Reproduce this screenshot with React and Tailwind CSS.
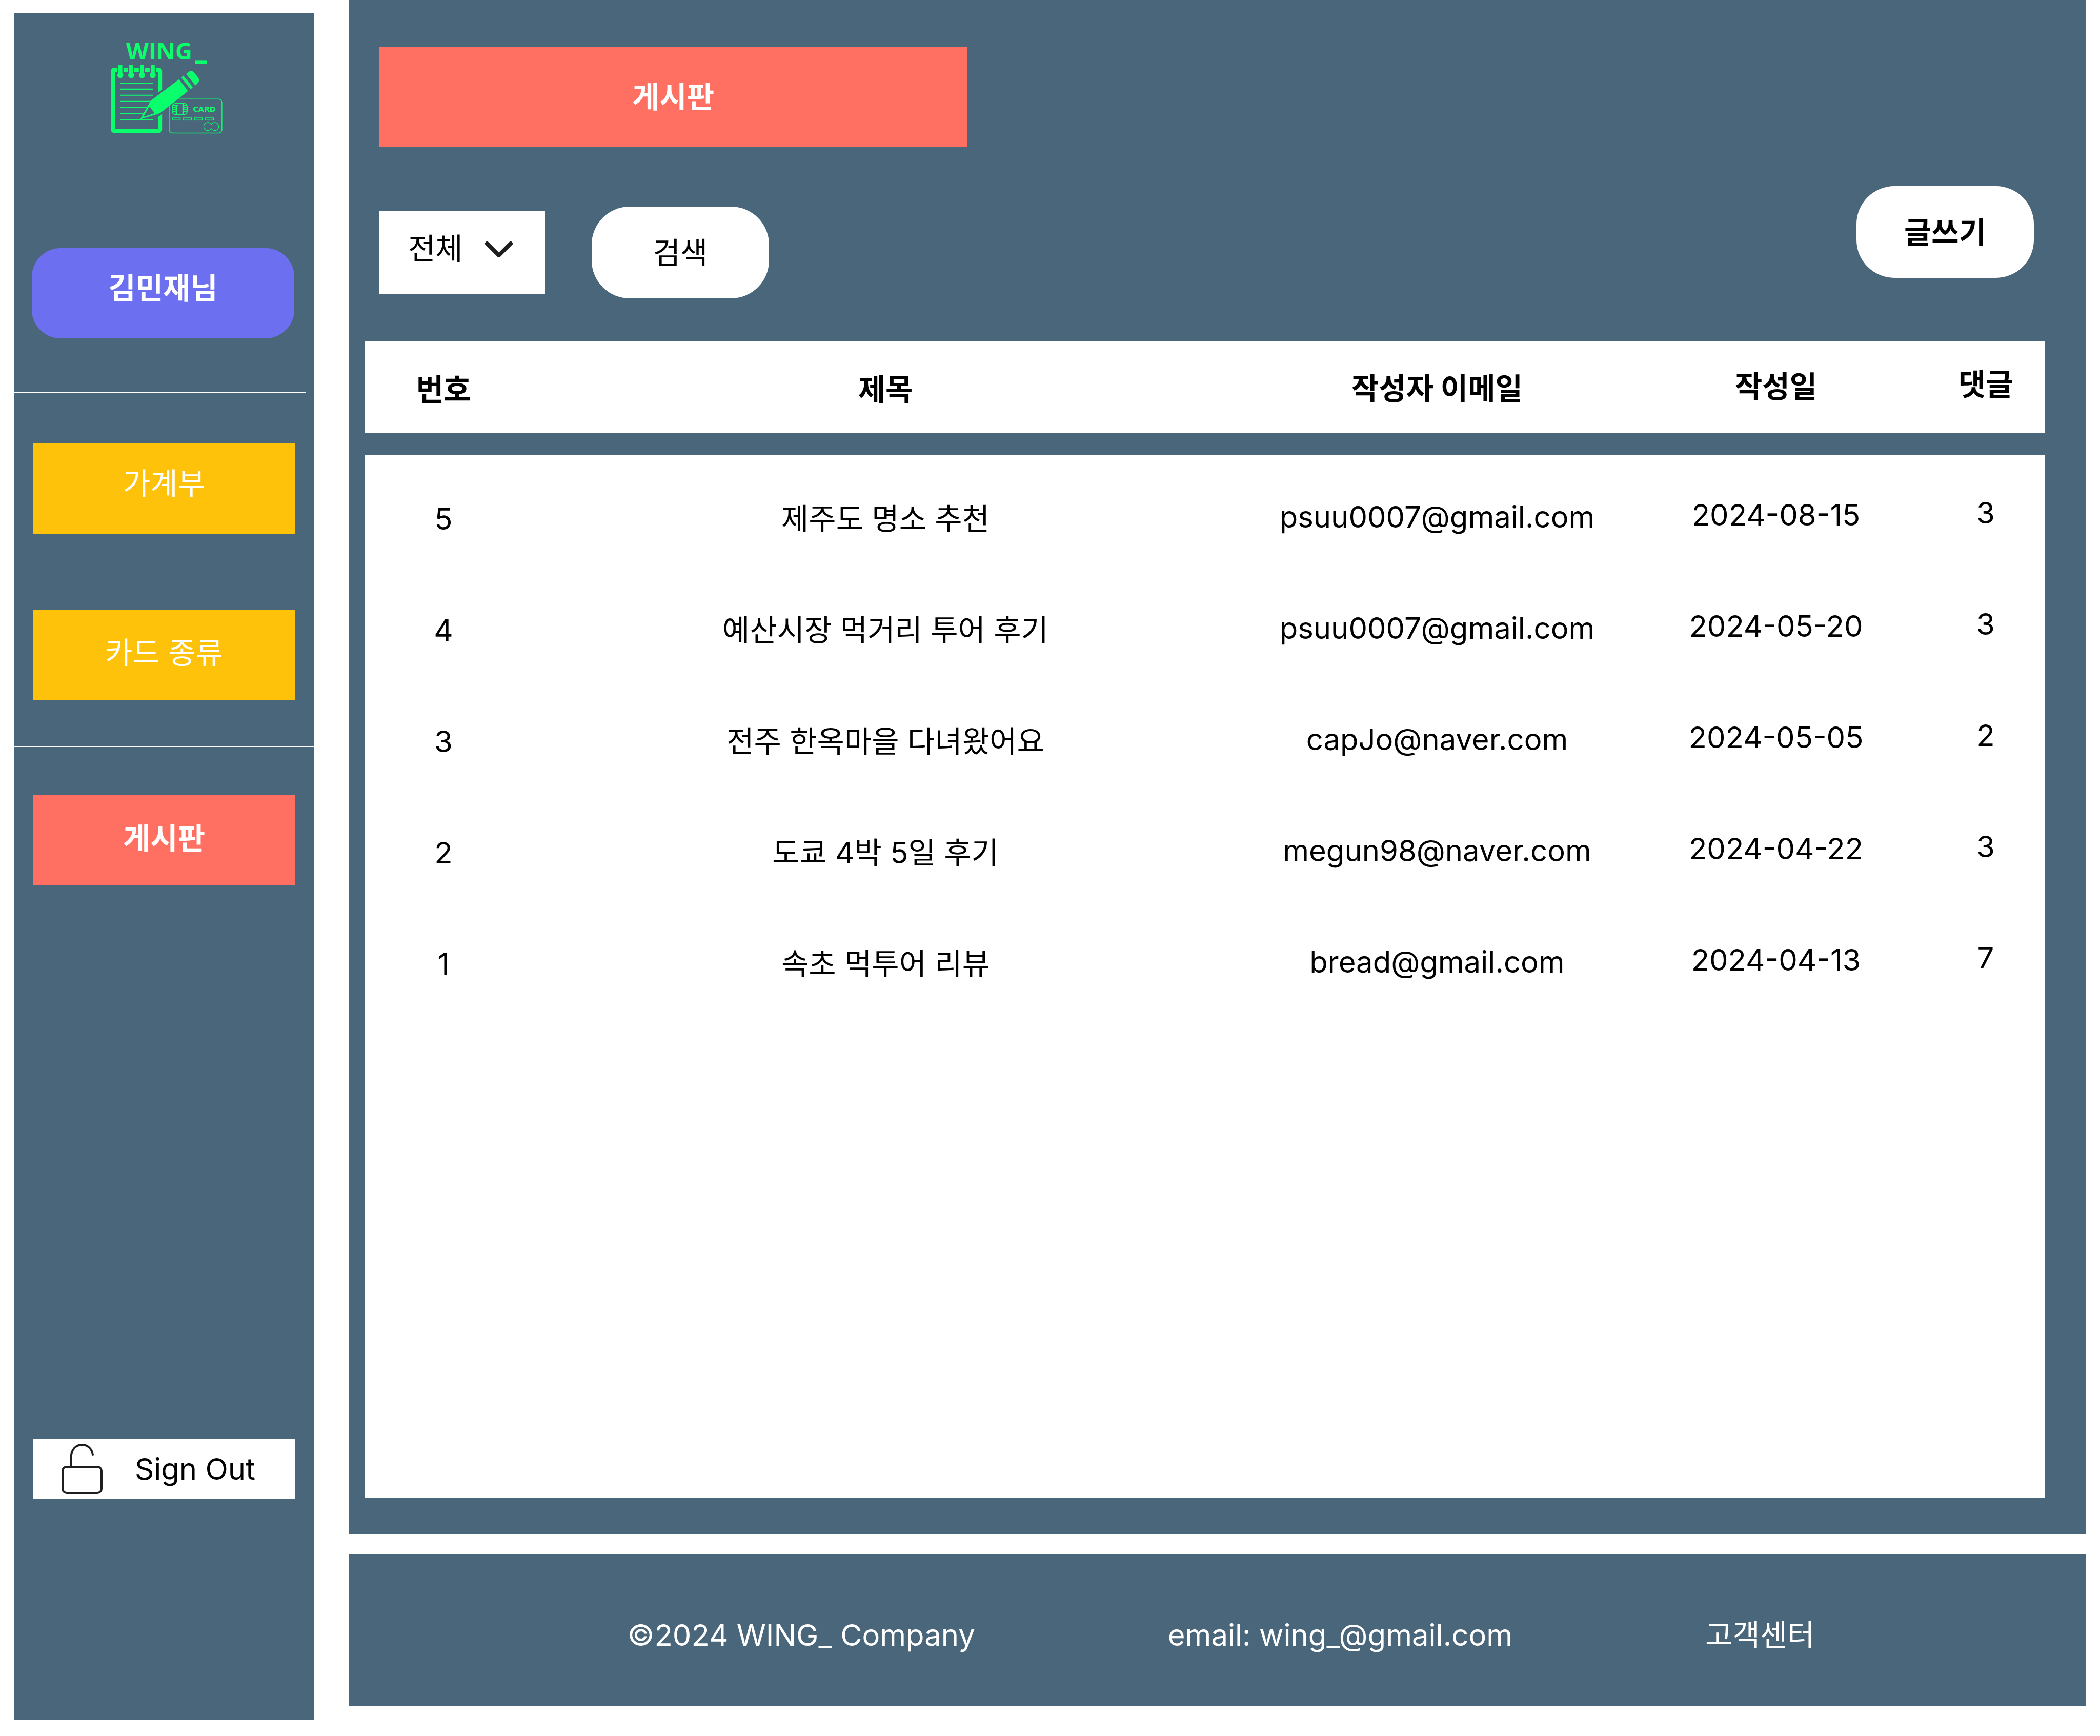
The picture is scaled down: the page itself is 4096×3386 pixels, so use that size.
const posts = [
  { no: 5, title: "제주도 명소 추천", email: "psuu0007@gmail.com", date: "2024-08-15", comments: 3 },
  { no: 4, title: "예산시장 먹거리 투어 후기", email: "psuu0007@gmail.com", date: "2024-05-20", comments: 3 },
  { no: 3, title: "전주 한옥마을 다녀왔어요", email: "capJo@naver.com", date: "2024-05-05", comments: 2 },
  { no: 2, title: "도쿄 4박 5일 후기", email: "megun98@naver.com", date: "2024-04-22", comments: 3 },
  { no: 1, title: "속초 먹투어 리뷰", email: "bread@gmail.com", date: "2024-04-13", comments: 7 },
];

const rowGrid = "grid grid-cols-[306fr_1418fr_734fr_588fr_230fr] items-center text-center";

function Logo() {
  const ringCenters = [115, 184.5, 254, 323.5];
  const lines = [324, 363, 402, 442, 481, 520, 560];
  return (
    <svg viewBox="50 60 725 590" className="h-[179px] w-[220px] overflow-visible" role="img" aria-label="WING_ CARD">
      <g fill="#0aff6c">
        <text x="152" y="171" fontSize="150" fontWeight="700" fontFamily="'Open Sans', sans-serif">WING</text>
        <rect x="594" y="180" width="78" height="21" />
      </g>
      <rect x="67.5" y="238" width="303" height="394" rx="8" fill="none" stroke="#0aff6c" strokeWidth="26" />
      {ringCenters.map((cx) => (
        <g key={cx}>
          <rect x={cx - 20} y="222" width="40" height="32" fill="#4a667a" />
          <rect x={cx - 12.5} y="205" width="25" height="66" fill="#0aff6c" />
          <circle cx={cx} cy="273" r="19.5" fill="#0aff6c" />
        </g>
      ))}
      {lines.map((y) => (
        <path key={y} d={`M114 ${y}H324`} stroke="#0aff6c" strokeWidth="7" />
      ))}
      <path d="M356 386L386 364V523L356 541Z" fill="#4a667a" />
      <g fill="none" stroke="#0aff6c" strokeWidth="5">
        <rect x="429" y="427" width="339" height="218" rx="22" />
        <rect x="449" y="455" width="96" height="71" rx="20" />
        <path d="M475 472V526M518 455V526" strokeWidth="8" />
        <path d="M449 467H487M449 480H475M449 493H475M449 507H475M518 467H543M518 480H545M518 493H545M518 507H543" />
        <rect x="449" y="548" width="51" height="14" />
        <rect x="521" y="548" width="51" height="14" />
        <rect x="591" y="548" width="51" height="14" />
        <rect x="663" y="548" width="51" height="14" />
        <path d="M699.5 590A26 26 0 1 0 699.5 616A26 26 0 1 0 699.5 590Z" strokeWidth="4" />
      </g>
      <text x="582" y="507" fontSize="47" fontWeight="700" fontFamily="'DejaVu Sans', sans-serif" fill="#0aff6c">CARD</text>
      <path d="M492 300L550 375L384 507Q372 518 358 522L243 556L303 450Q308 440 318 432Z" fill="#0aff6c" />
      <path d="M301 474L336 517L262 542Z" fill="#4a667a" />
      <path d="M507 288L520 276L581 350L567 364Z" fill="#0aff6c" />
      <path d="M538 265L552 253Q573 238 590 257L613 285Q628 305 614 323L597 339Z" fill="#0aff6c" />
    </svg>
  );
}

function UnlockIcon() {
  return (
    <svg viewBox="0 0 80 98" className="h-[98px] w-[80px]" fill="none" stroke="#1e1e1e" strokeWidth="4" strokeLinecap="round" aria-hidden="true">
      <rect x="2" y="45" width="76" height="51" rx="8" />
      <path d="M18.500 44V27C18.500 13 27 2 40 2C51 2 59 10 61 21" />
    </svg>
  );
}

function Sidebar() {
  return (
    <aside className="mt-[25px] mb-[31px] flex w-[586px] shrink-0 flex-col border border-[#6df2e0] bg-[#4a667a] text-white">
      <a href="#home" className="ml-[187px] mt-[56px] block w-[220px]">
        <Logo />
      </a>
      <button type="button" className="ml-[34px] mt-[223px] h-[176px] w-[512px] rounded-[56px] bg-[#6c70f0] pb-[20px] font-bold">
        김민재님
      </button>
      <hr className="mt-[105px] mr-[16px] border-white" />
      <nav className="flex flex-col">
        <a href="#ledger" className="mx-[36px] mt-[99px] flex h-[176px] items-center justify-center bg-[#ffc20a] pb-[20px]">가계부</a>
        <a href="#cards" className="mx-[36px] mt-[148px] flex h-[176px] items-center justify-center bg-[#ffc20a] pb-[8px]">카드 종류</a>
        <hr className="mt-[91px] border-white" />
        <a href="#board" aria-current="page" className="mx-[36px] mt-[94px] flex h-[176px] items-center justify-center bg-[#ff7062] pb-[8px] font-bold">게시판</a>
      </nav>
      <button type="button" className="mx-[36px] mt-auto mb-[431px] flex h-[116px] items-center gap-[63px] bg-white pl-[56px] text-black">
        <UnlockIcon />
        Sign Out
      </button>
    </aside>
  );
}

function Toolbar() {
  return (
    <div className="mt-[77px] flex items-start pr-[101px] pl-[58px] text-black">
      <div className="relative mt-[49px] h-[162px] w-[324px]">
        <select aria-label="검색 범위" className="h-full w-full appearance-none rounded-none bg-white pb-[16px] pl-[57px]">
          <option>전체</option>
        </select>
        <svg viewBox="0 0 56 34" className="pointer-events-none absolute top-[58px] right-[62px] h-[34px] w-[56px]" fill="none" stroke="#1e1e1e" strokeWidth="8" strokeLinecap="round" strokeLinejoin="round" aria-hidden="true">
          <path d="M5 5L28 28L51 5" />
        </svg>
      </div>
      <button type="button" className="mt-[40px] ml-[91px] h-[179px] w-[346px] rounded-[74px] bg-white">검색</button>
      <button type="button" className="ml-auto h-[179px] w-[346px] rounded-[74px] bg-white font-bold">글쓰기</button>
    </div>
  );
}

function Board() {
  return (
    <table className="mt-[84px] mr-[80px] mb-[70px] ml-[31px] flex flex-1 flex-col gap-[43px] text-black">
      <thead className="block bg-white">
        <tr className={rowGrid + " h-[179px] pt-2"}>
          <th className="font-bold">번호</th>
          <th className="font-bold">제목</th>
          <th className="pb-1 font-bold">작성자 이메일</th>
          <th className="pb-3 font-bold">작성일</th>
          <th className="pb-5 font-bold">댓글</th>
        </tr>
      </thead>
      <tbody className="block flex-1 bg-white pt-[15px]">
        {posts.map((p) => (
          <tr key={p.no} className={rowGrid + " h-[217px]"}>
            <td>{p.no}</td>
            <td>{p.title}</td>
            <td className="pb-2">{p.email}</td>
            <td className="pb-4">{p.date}</td>
            <td className="pb-6">{p.comments}</td>
          </tr>
        ))}
      </tbody>
    </table>
  );
}

export default function App() {
  return (
    <div className="flex min-h-screen bg-white pr-[28px] pl-[27px] font-['Inter','Noto_Sans_CJK_KR',sans-serif] text-[58px] leading-[80px]">
      <Sidebar />
      <div className="ml-[68px] flex flex-1 flex-col">
        <main className="flex flex-1 flex-col bg-[#4a667a]">
          <h1 className="mt-[91px] ml-[58px] flex h-[195px] w-[1148px] items-center justify-center bg-[#ff7062] font-bold text-white">게시판</h1>
          <Toolbar />
          <Board />
        </main>
        <footer className="mt-[39px] mb-[59px] flex h-[296px] items-center justify-center gap-[376px] bg-[#4a667a] pt-[20px] pl-[14px] text-white">
          <p>©2024 WING_ Company</p>
          <a href="mailto:wing_@gmail.com">email: wing_@gmail.com</a>
          <a href="#support">고객센터</a>
        </footer>
      </div>
    </div>
  );
}
